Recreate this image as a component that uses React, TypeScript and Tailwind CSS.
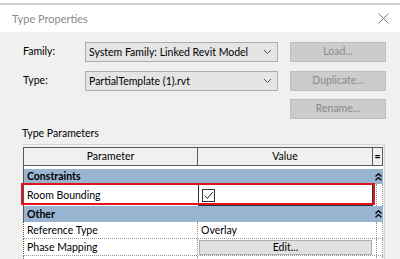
import React from "react";

function Chevron() {
  return (
    <svg width="9" height="6" viewBox="0 0 9 6" className="block">
      <path d="M1 1 L4.5 4.5 L8 1" fill="none" stroke="#555" strokeWidth="1" />
    </svg>
  );
}

function DoubleCaret() {
  return (
    <svg width="7" height="8" viewBox="0 0 7 8" className="block">
      <path d="M0.5 3.5 L3.5 0.8 L6.5 3.5" fill="none" stroke="#000" strokeWidth="1.4" />
      <path d="M0.5 7.3 L3.5 4.6 L6.5 7.3" fill="none" stroke="#000" strokeWidth="1.4" />
    </svg>
  );
}

function Select({ text }: { text: string }) {
  return (
    <div className="w-[193px] h-[20px] bg-[#e5e5e5] border border-[#adadad] flex items-center justify-between pl-[3px] pr-[5px]">
      <span className="leading-none whitespace-nowrap">{text}</span>
      <Chevron />
    </div>
  );
}

function Btn({ text }: { text: string }) {
  return (
    <div className="ml-[12px] w-[96px] h-[20px] bg-[#cccccc] border border-[#bfbfbf] flex items-center justify-center text-[#8a8a8a] whitespace-nowrap">
      {text}
    </div>
  );
}

function GroupRow({ label, h }: { label: string; h: string }) {
  return (
    <div className={`flex ${h} bg-[#99b4d1] border-l border-[#555]`}>
      <div className="w-[349px] pl-[3px] font-bold flex items-center leading-none">{label}</div>
      <div className="flex-1 flex items-center justify-center">
        <DoubleCaret />
      </div>
    </div>
  );
}

function DataRow({ label, children, h }: { label: string; children?: React.ReactNode; h: string }) {
  return (
    <div className={`flex ${h} bg-white border-l border-[#555] border-b border-dotted border-b-[#9a9a9a]`}>
      <div className="w-[174px] pl-[3px] flex items-center leading-none border-r border-dotted border-r-[#9a9a9a]">{label}</div>
      <div className="w-[175px] flex items-center">{children}</div>
      <div className="w-[3px]" />
      <div className="flex-1 border-l border-r border-dotted border-[#9a9a9a]" />
    </div>
  );
}

export default function App() {
  return (
    <div className="w-[400px] h-[259px] overflow-hidden bg-white flex flex-col text-[10.5px] text-black font-['Lato',sans-serif]">
      <div className="h-[3px] shrink-0" />
      <div className="h-[2px] bg-[#d0d0d0] shrink-0" />
      <div className="h-[27px] shrink-0 flex items-center justify-between pl-[12px] pr-[11px] text-[#8a8a8a]">
        <span className="leading-none text-[11px]">Type Properties</span>
        <svg width="11" height="11" viewBox="0 0 11 11">
          <path d="M0.5 0.5 L10.5 10.5 M10.5 0.5 L0.5 10.5" stroke="#7a7a7a" strokeWidth="1" />
        </svg>
      </div>
      <div className="flex-1 bg-[#f0f0f0] pl-[23px] pt-[10px] flex flex-col">
        <div className="flex items-center h-[20px]">
          <div className="w-[62px]">Family:</div>
          <Select text="System Family: Linked Revit Model" />
          <Btn text="Load..." />
        </div>
        <div className="flex items-center h-[20px] mt-[9px]">
          <div className="w-[62px]">Type:</div>
          <Select text="PartialTemplate (1).rvt" />
          <Btn text="Duplicate..." />
        </div>
        <div className="flex items-center h-[20px] mt-[8px]">
          <div className="w-[255px]" />
          <Btn text="Rename..." />
        </div>
        <div className="mt-[6px] h-[16px] leading-[16px] -ml-[1px]">Type Parameters</div>
        <div className="relative mt-[3px] w-[362px] border-t border-r border-[#d6d6d6] pt-[2px] pr-[1px]">
          <div className="flex h-[19px]">
            <div className="w-[175px] bg-[#f0f0f0] border border-[#5a5a5a] flex items-center justify-center">Parameter</div>
            <div className="w-[175px] bg-[#f0f0f0] border border-l-0 border-[#5a5a5a] flex items-center justify-center">Value</div>
            <div className="flex-1 bg-[#f0f0f0] border border-l-0 border-[#5a5a5a] flex items-center justify-center font-bold leading-none">=</div>
          </div>
          <div className="h-[3px] bg-white border-l border-[#555]" />
          <GroupRow label="Constraints" h="h-[15px]" />
          <div className="flex h-[22px] bg-white border-l border-[#555]">
            <div className="w-[174px] pl-[3px] flex items-center leading-none">Room Bounding</div>
            <div className="w-[175px] flex items-center pl-[3px] border border-[#333]">
              <div className="w-[13px] h-[13px] border border-[#333] bg-white flex items-center justify-center">
                <svg width="11" height="11" viewBox="0 0 11 11">
                  <path d="M1.5 5.5 L4.3 8.5 L9.8 2" fill="none" stroke="#222" strokeWidth="1" />
                </svg>
              </div>
            </div>
            <div className="w-[3px]" />
            <div className="flex-1 border-l border-r border-dotted border-[#9a9a9a]" />
          </div>
          <GroupRow label="Other" h="h-[16px]" />
          <DataRow label="Reference Type" h="h-[17px]">
            <span className="pl-[3px] leading-none">Overlay</span>
          </DataRow>
          <DataRow label="Phase Mapping" h="h-[17px]">
            <div className="ml-[1px] w-[173px] h-[15px] bg-[#e1e1e1] border border-[#adadad] flex items-center justify-center leading-none">
              Edit...
            </div>
          </DataRow>
          <DataRow label="" h="h-[17px]" />
          <div className="absolute left-[-2px] top-[38px] w-[354px] h-[22px] border-2 border-[#e0161c] pointer-events-none" />
        </div>
      </div>
    </div>
  );
}
